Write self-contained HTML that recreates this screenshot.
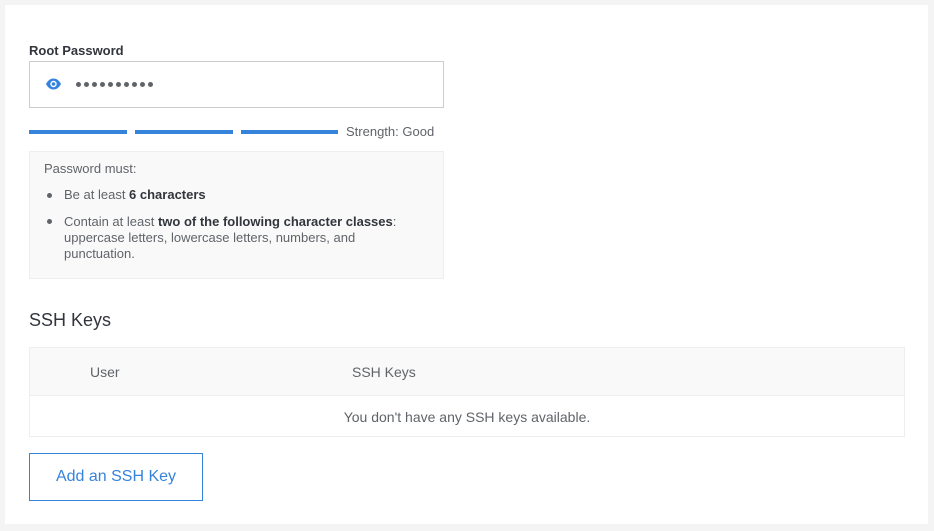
<!DOCTYPE html>
<html><head><style>
*{margin:0;padding:0;box-sizing:border-box}
body{width:934px;height:531px;background:#f4f4f4;font-family:"Liberation Sans",sans-serif;color:#606469;position:relative;overflow:hidden}
.card{position:absolute;left:5px;top:5px;width:923px;height:519px;background:#fff}
.a{position:absolute;white-space:nowrap}
.bar{position:absolute;top:130px;height:4px;background:#3683dc}
.dot{position:absolute;top:82px;width:5px;height:5px;border-radius:50%;background:#606469}
.bul{position:absolute;left:47px;width:5px;height:5px;border-radius:50%;background:#606469}
</style></head><body>
<div class="card"></div>
<div class="a" style="left:29px;top:43px;font-size:13px;font-weight:bold;color:#32363c">Root Password</div>
<div class="a" style="left:29px;top:61px;width:415px;height:47px;border:1px solid #ccc"></div>
<svg class="a" style="left:45px;top:77px" width="17" height="14" viewBox="0 0 17 14"><path d="M1 7C3 3 6 1.5 8.5 1.5S14 3 16 7C14 11 11 12.5 8.5 12.5S3 11 1 7Z" fill="#3683dc"/><circle cx="8.5" cy="7" r="3.2" fill="#fff"/><circle cx="8.5" cy="7" r="1.8" fill="#3683dc"/></svg>
<div class="dot" style="left:76px"></div><div class="dot" style="left:84px"></div><div class="dot" style="left:92px"></div><div class="dot" style="left:100px"></div><div class="dot" style="left:108px"></div><div class="dot" style="left:116px"></div><div class="dot" style="left:124px"></div><div class="dot" style="left:132px"></div><div class="dot" style="left:140px"></div><div class="dot" style="left:148px"></div>
<div class="bar" style="left:29px;width:98px"></div>
<div class="bar" style="left:135px;width:98px"></div>
<div class="bar" style="left:241px;width:97px"></div>
<div class="a" style="left:346px;top:124px;font-size:13px;color:#606469">Strength: Good</div>
<div class="a" style="left:29px;top:151px;width:415px;height:128px;background:#f9f9f9;border:1px solid #eee"></div>
<div class="a" style="left:44px;top:161px;font-size:13px">Password must:</div>
<div class="bul" style="top:193px"></div>
<div class="a" style="left:64px;top:187px;font-size:13px">Be at least <b style="color:#32363c">6 characters</b></div>
<div class="bul" style="top:219px"></div>
<div class="a" style="left:64px;top:214px;font-size:13px;line-height:16px">Contain at least <b style="color:#32363c">two of the following character classes</b>:<br>uppercase letters, lowercase letters, numbers, and<br>punctuation.</div>
<div class="a" style="left:29px;top:310px;font-size:18px;color:#32363c">SSH Keys</div>
<div class="a" style="left:29px;top:347px;width:876px;height:90px;border:1px solid #eee"></div>
<div class="a" style="left:30px;top:348px;width:874px;height:48px;background:#f9f9f9;border-bottom:1px solid #eee"></div>
<div class="a" style="left:90px;top:364px;font-size:14px">User</div>
<div class="a" style="left:352px;top:364px;font-size:14px">SSH Keys</div>
<div class="a" style="left:29px;top:409px;width:876px;text-align:center;font-size:14px">You don't have any SSH keys available.</div>
<div class="a" style="left:29px;top:453px;width:174px;height:48px;border:1px solid #3683dc;color:#3683dc;font-size:16px;line-height:46px;text-align:center">Add an SSH Key</div>
</body></html>
